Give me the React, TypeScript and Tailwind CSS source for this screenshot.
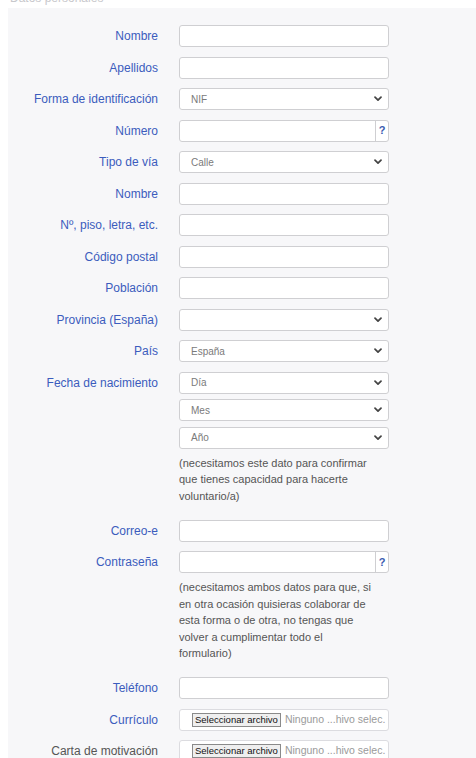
import React from "react";

const labelCls =
  "w-[150px] shrink-0 text-right text-[12px] leading-[22px] h-[22px] whitespace-nowrap";

function Chevron() {
  return (
    <svg width="8" height="6" viewBox="0 0 8 6" className="absolute right-[6px] top-1/2 -translate-y-1/2">
      <polyline points="1,1.2 4,4.2 7,1.2" fill="none" stroke="#444" strokeWidth="1.7" strokeLinecap="round" strokeLinejoin="round" />
    </svg>
  );
}

function TextBox({ help = false }: { help?: boolean }) {
  return (
    <div className="flex h-[22px] w-[210px] rounded-[3px] border border-[#cfcfd2] bg-white">
      <div className="flex-1" />
      {help && (
        <div className="flex w-[13px] items-center justify-center border-l border-[#cfcfd2] text-[11px] font-bold text-[#3a5bb0]">
          ?
        </div>
      )}
    </div>
  );
}

function SelectBox({ value = "" }: { value?: string }) {
  return (
    <div className="relative flex h-[22px] w-[210px] items-center rounded-[3px] border border-[#cfcfd2] bg-white pl-[11px] text-[10px] text-[#7a7a7a]">
      {value}
      <Chevron />
    </div>
  );
}

function FileBox() {
  return (
    <div className="flex h-[22px] w-[210px] items-center overflow-hidden rounded-[3px] border border-[#dcdce0] bg-white pl-[12px] font-['Liberation_Sans',Arial,sans-serif]">
      <div className="flex h-[14px] shrink-0 items-center whitespace-nowrap border border-[#8a8a8a] bg-[#efefef] px-[2px] text-[9.5px] leading-none text-[#111]">
        Seleccionar archivo
      </div>
      <span className="ml-[4px] whitespace-nowrap text-[10.5px] text-[#9a9a9a]">Ninguno ...hivo selec.</span>
    </div>
  );
}

function Row({
  label,
  muted = false,
  children,
}: {
  label: string;
  muted?: boolean;
  children: React.ReactNode;
}) {
  return (
    <div className="flex">
      <div className={`${labelCls} ${muted ? "text-[#555]" : "text-[#3b5cbd]"}`}>{label}</div>
      <div className="ml-[21px] w-[210px]">{children}</div>
    </div>
  );
}

function Note({ lines }: { lines: string[] }) {
  return (
    <div className="mt-[6px] mb-[6px] text-[11px] leading-[16.5px] text-[#555]">
      {lines.map((l) => (
        <div key={l} className="whitespace-nowrap">
          {l}
        </div>
      ))}
    </div>
  );
}

export default function App() {
  return (
    <div className="min-h-[758px] w-[476px] overflow-hidden bg-white font-['Liberation_Sans',Arial,sans-serif]">
      <div className="h-2 overflow-hidden pl-[10px]">
        <div className="-mt-[11px] text-[12px] text-[#c8c8cc]">Datos personales</div>
      </div>
      <div className="ml-2 flex min-h-[750px] flex-col gap-[9.5px] bg-[#f7f7f9] pt-[17px]">
        <Row label="Nombre">
          <TextBox />
        </Row>
        <Row label="Apellidos">
          <TextBox />
        </Row>
        <Row label="Forma de identificación">
          <SelectBox value="NIF" />
        </Row>
        <Row label="Número">
          <TextBox help />
        </Row>
        <Row label="Tipo de vía">
          <SelectBox value="Calle" />
        </Row>
        <Row label="Nombre">
          <TextBox />
        </Row>
        <Row label="Nº, piso, letra, etc.">
          <TextBox />
        </Row>
        <Row label="Código postal">
          <TextBox />
        </Row>
        <Row label="Población">
          <TextBox />
        </Row>
        <Row label="Provincia (España)">
          <SelectBox />
        </Row>
        <Row label="País">
          <SelectBox value="España" />
        </Row>
        <Row label="Fecha de nacimiento">
          <div className="flex flex-col gap-[5.5px]">
            <SelectBox value="Día" />
            <SelectBox value="Mes" />
            <SelectBox value="Año" />
          </div>
          <Note
            lines={[
              "(necesitamos este dato para confirmar",
              "que tienes capacidad para hacerte",
              "voluntario/a)",
            ]}
          />
        </Row>
        <Row label="Correo-e">
          <TextBox />
        </Row>
        <Row label="Contraseña">
          <TextBox help />
          <Note
            lines={[
              "(necesitamos ambos datos para que, si",
              "en otra ocasión quisieras colaborar de",
              "esta forma o de otra, no tengas que",
              "volver a cumplimentar todo el",
              "formulario)",
            ]}
          />
        </Row>
        <Row label="Teléfono">
          <TextBox />
        </Row>
        <Row label="Currículo">
          <FileBox />
        </Row>
        <Row label="Carta de motivación" muted>
          <FileBox />
        </Row>
      </div>
    </div>
  );
}
